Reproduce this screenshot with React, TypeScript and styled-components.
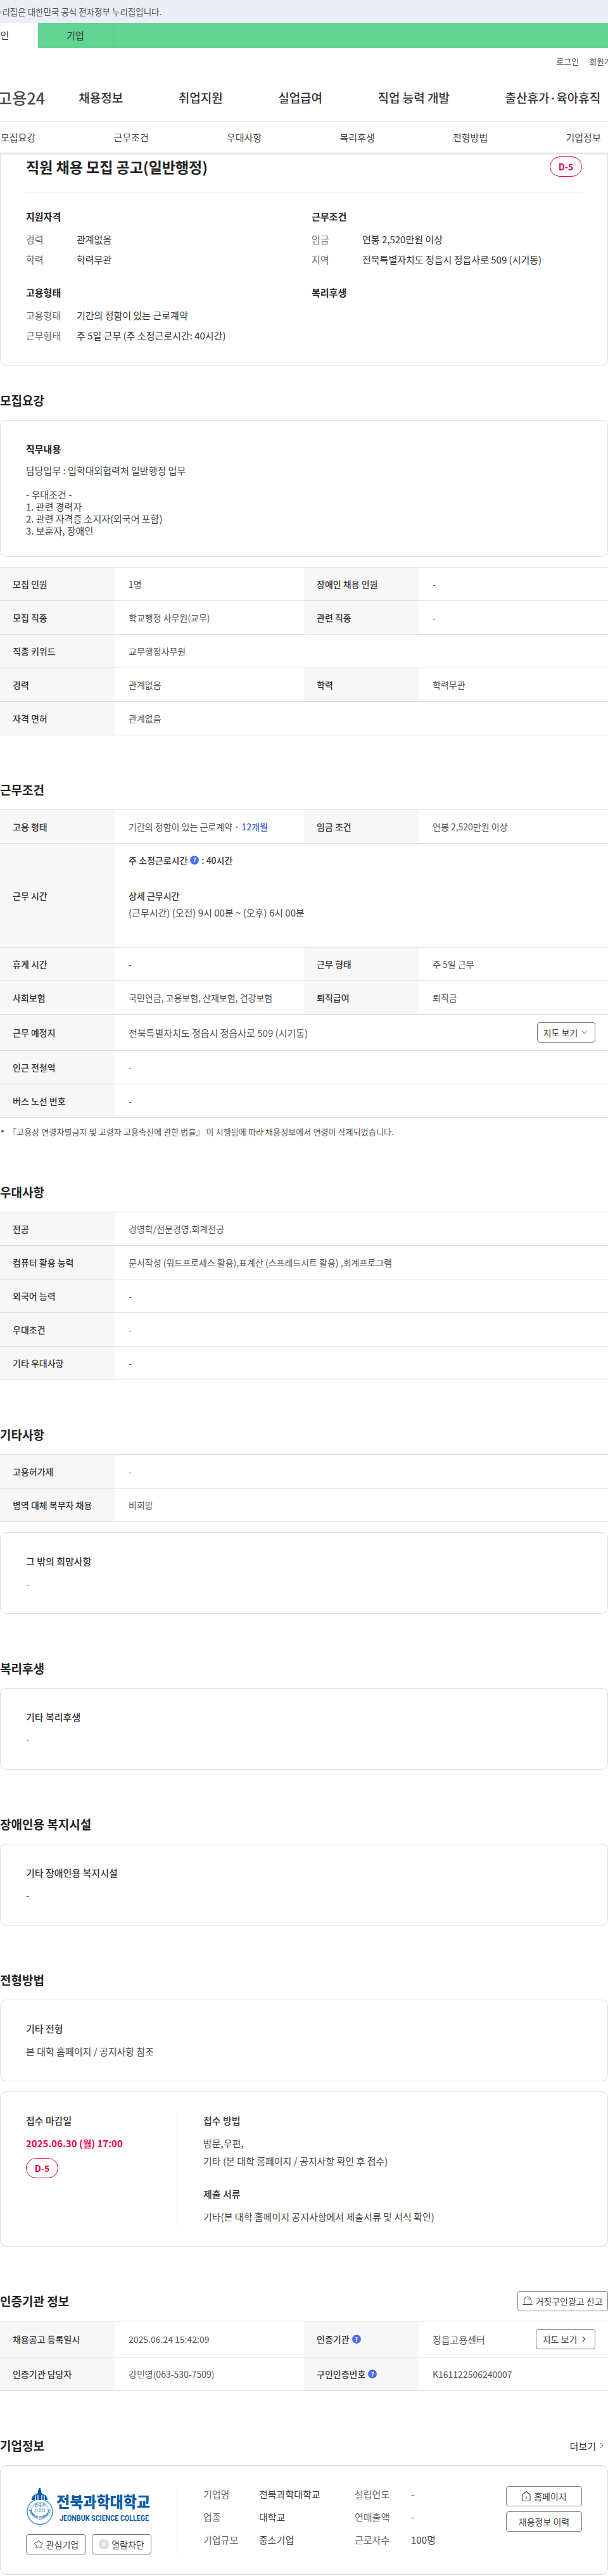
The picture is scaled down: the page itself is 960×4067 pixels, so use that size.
import type { ReactNode } from 'react';
import { ChevronDown, ChevronRight, Star } from 'lucide-react';
import { createGlobalStyle, styled } from 'styled-components';

const GlobalStyle = createGlobalStyle`
  html, body {
    margin: 0;
    padding: 0;
    background: #fff;
    overflow-x: hidden;
  }
  body {
    font-family: "Noto Sans CJK KR", "Noto Sans", sans-serif;
    color: #333;
  }
  * {
    box-sizing: border-box;
  }
`;

const Page = styled.div`
  width: 960px;
  overflow: hidden;
`;

const GovBar = styled.div`
  height: 36px;
  background: #ebeff5;
  font-size: 13.5px;
  line-height: 36px;
  color: #555;
  margin-left: 0;
  span {
    display: block;
    margin-left: -9px;
  }
`;

const UserBar = styled.div`
  display: flex;
  height: 40px;
  background: #60d591;
`;

const UserTab = styled.div<{ $active?: boolean }>`
  flex: 0 0 119px;
  margin-left: ${(p) => (p.$active ? '-59px' : '0')};
  text-align: center;
  font-size: 15px;
  line-height: 40px;
  color: #333;
  background: ${(p) => (p.$active ? '#fff' : 'transparent')};
  border-right: ${(p) => (p.$active ? '0' : '1px solid rgba(0, 0, 0, 0.06)')};
`;

const UtilNav = styled.div`
  display: flex;
  justify-content: flex-end;
  align-items: center;
  gap: 16px;
  height: 40px;
  margin-right: -18px;
  font-size: 13px;
  color: #555;
`;

const MainNav = styled.nav`
  display: flex;
  align-items: center;
  height: 76px;
  border-bottom: 1px solid #eee;
  white-space: nowrap;
`;

const SiteLogo = styled.div`
  margin-left: -4px;
  margin-right: 53px;
  font-size: 25px;
  font-weight: 500;
  letter-spacing: 0.2px;
  color: #4a4a4a;
`;

const MainNavItem = styled.a`
  margin-right: 87.5px;
  font-size: 19px;
  font-weight: 500;
  color: #333;
`;

const TabBar = styled.div`
  position: relative;
  z-index: 2;
  display: grid;
  grid-template-columns: repeat(6, 178.5px);
  height: 49px;
  padding-left: 1px;
  align-items: center;
  background: #fff;
  box-shadow: 0 1px 3px rgba(0, 0, 0, 0.25);
  font-size: 15px;
  color: #444;
`;

const Card = styled.div<{ $flat?: boolean }>`
  border: 1px solid #ddd;
  border-top-width: ${(p) => (p.$flat ? '0' : '1px')};
  border-radius: ${(p) => (p.$flat ? '0 0 10px 10px' : '10px')};
  background: #fff;
`;

const SummaryCard = styled(Card)`
  padding: 0 40px 36px;
`;

const TitleRow = styled.div`
  display: flex;
  justify-content: space-between;
  align-items: center;
  padding: 6px 0 25px;
  border-bottom: 1px solid #eee;
`;

const JobTitle = styled.h1`
  margin: 0;
  font-size: 23px;
  font-weight: 600;
  line-height: 31px;
  color: #222;
`;

const DdayBadge = styled.span`
  display: flex;
  align-items: center;
  justify-content: center;
  width: 51px;
  height: 32px;
  border: 1px solid #e6004c;
  border-radius: 16px;
  font-size: 14px;
  font-weight: 600;
  color: #e6004c;
`;

const SummaryGrid = styled.div`
  display: grid;
  grid-template-columns: 451px 1fr;
  row-gap: 32px;
  margin-top: 27px;
`;

const SummaryHeading = styled.h3`
  margin: 0 0 16px;
  font-size: 15px;
  line-height: 20px;
  font-weight: 600;
  color: #222;
`;

const SummaryRow = styled.div`
  display: flex;
  height: 20px;
  margin-bottom: 12px;
  font-size: 15px;
  line-height: 20px;
  &:last-child {
    margin-bottom: 0;
  }
`;

const SummaryLabel = styled.span`
  flex: 0 0 80px;
  color: #666;
`;

const SummaryValue = styled.span`
  color: #333;
`;

const Section = styled.section<{ $first?: boolean }>`
  margin-top: ${(p) => (p.$first ? '40px' : '71px')};
`;

const SectionHead = styled.div`
  display: flex;
  justify-content: space-between;
  align-items: center;
  height: 30px;
  margin-bottom: 16px;
`;

const SectionTitle = styled.h2`
  margin: 0;
  font-size: 19px;
  line-height: 30px;
  font-weight: 600;
  color: #222;
`;

const MoreLink = styled.a`
  display: flex;
  align-items: center;
  gap: 1px;
  margin-right: 2px;
  font-size: 15px;
  color: #333;
`;

const InfoCard = styled(Card)<{ $tail?: number }>`
  padding: 35px 40px ${(p) => p.$tail ?? 36}px;
  margin-top: 16px;
  &:first-child {
    margin-top: 0;
  }
`;

const InfoTitle = styled.h3`
  margin: 0 0 16px;
  font-size: 15px;
  line-height: 20px;
  font-weight: 500;
  color: #333;
`;

const InfoBody = styled.div`
  font-size: 15px;
  line-height: 20px;
  color: #444;
`;

const DutyTitle = styled(InfoTitle)`
  font-weight: 600;
  margin-bottom: 14px;
  color: #222;
`;

const DutyText = styled.div`
  font-size: 15px;
  line-height: 19px;
  color: #444;
  white-space: pre-line;
`;

const Table = styled.div`
  margin-top: 16px;
  border-top: 1px solid #ddd;
  &:first-child {
    margin-top: 0;
  }
`;

const Row = styled.div`
  display: grid;
  grid-template-columns: 182px 298px 182px 1fr;
  min-height: 53px;
  border-bottom: 1px solid #ddd;
`;

const Th = styled.div`
  display: flex;
  align-items: center;
  gap: 4px;
  padding: 0 20px;
  background: #f7f7f7;
  font-size: 14px;
  font-weight: 500;
  color: #333;
`;

const Td = styled.div<{ $wide?: boolean; $large?: boolean }>`
  display: flex;
  align-items: center;
  justify-content: space-between;
  grid-column: ${(p) => (p.$wide ? 'span 3' : 'auto')};
  padding: ${(p) => (p.$large ? '12px 20px 12px 21px' : '0 21px')};
  font-size: ${(p) => (p.$large ? '15px' : '14px')};
  color: #555;
`;

const WorkTime = styled.div`
  grid-column: span 3;
  padding: 16px 21px 44px;
  font-size: 14px;
  line-height: 20px;
  color: #444;
`;

const WorkHours = styled.div`
  display: flex;
  align-items: center;
  gap: 4px;
  margin-bottom: 36px;
  font-weight: 500;
  color: #333;
`;

const WorkDetailTitle = styled.div`
  margin-bottom: 7px;
  font-weight: 500;
  color: #333;
`;

const WorkDetail = styled.div`
  font-size: 15px;
  color: #444;
`;

const Period = styled.span`
  color: #3a5fe5;
  font-weight: 500;
`;

const HelpDot = styled.span`
  display: inline-flex;
  align-items: center;
  justify-content: center;
  width: 14px;
  height: 14px;
  border-radius: 50%;
  background: #4f6fe8;
  font-size: 9px;
  font-weight: 700;
  color: #fff;
`;

const OutlineButton = styled.button<{ $width: number }>`
  display: inline-flex;
  align-items: center;
  justify-content: center;
  gap: 4px;
  flex: none;
  height: 32px;
  width: ${(p) => p.$width}px;
  padding: 0;
  background: #fff;
  border: 1px solid #777;
  border-radius: 4px;
  font-family: inherit;
  font-size: 14px;
  color: #444;
  white-space: nowrap;
`;

const Note = styled.p`
  display: flex;
  align-items: center;
  gap: 5px;
  height: 20px;
  margin: 11px 0 0;
  padding-left: 2px;
  font-size: 13px;
  letter-spacing: 0.1px;
  color: #555;
  &::before {
    content: '';
    width: 4px;
    height: 4px;
    margin-right: 2px;
    border-radius: 50%;
    background: #666;
  }
`;

const ApplyCard = styled(Card)`
  display: flex;
  margin-top: 16px;
  padding: 32px 40px 31px;
`;

const DeadlineCol = styled.div`
  flex: 0 0 239px;
  padding-top: 3px;
  border-right: 1px solid #e5e5e5;
`;

const ApplyCol = styled.div`
  flex: 1;
  padding: 3px 0 0 41px;
  height: 180px;
`;

const DeadlineDate = styled.div`
  margin: 0 0 13px;
  font-size: 15px;
  line-height: 20px;
  font-weight: 600;
  color: #e6004c;
`;

const ApplyText = styled.div`
  margin-top: -4px;
  margin-bottom: 28px;
  font-size: 15px;
  line-height: 28px;
  color: #444;
  white-space: pre-line;
`;

const CompanyCard = styled(Card)`
  display: flex;
  padding: 32px 40px 31px;
`;

const CompanyLeft = styled.div`
  flex: 0 0 239px;
  border-right: 1px solid #e5e5e5;
`;

const LogoSvg = styled.svg`
  display: block;
  margin: 3px 0 14px;
`;

const InterestRow = styled.div`
  display: flex;
  gap: 9px;
`;

const CompanyInfo = styled.div`
  flex: 1;
  display: grid;
  grid-template-columns: 88px 151px 89px 1fr;
  grid-auto-rows: 20px;
  row-gap: 16px;
  padding: 3px 0 0 41px;
  font-size: 15px;
  line-height: 20px;
`;

const InfoLabel = styled.span`
  color: #666;
`;

const InfoValue = styled.span`
  color: #444;
`;

const CompanyActions = styled.div`
  display: flex;
  flex-direction: column;
  gap: 8px;
`;

const HomeIcon = ({ mark }: { mark?: boolean }) => (
  <svg width="16" height="18" viewBox="0 0 16 18" fill="none" stroke="#444" strokeWidth="1.1">
    {mark ? (
      <>
        <path d="M2 16.5V6.5L8 1.5l6 5v10z" strokeLinejoin="round" />
        <path d="M8 9.5v4" />
      </>
    ) : (
      <>
        <path d="M2.5 14V7.5a5.5 5.5 0 0 1 11 0V14" />
        <path d="M.5 14.5h15M8 5a2.5 2.5 0 0 1 2.5 2.5" />
      </>
    )}
  </svg>
);

const BlockIcon = () => (
  <svg width="16" height="16" viewBox="0 0 16 16">
    <circle cx="8" cy="8" r="8" fill="#ddd" />
    <path d="M5 5l6 6M11 5l-6 6" stroke="#fff" strokeWidth="1.4" />
  </svg>
);

const CollegeLogo = () => (
  <LogoSvg width="197" height="59" viewBox="0 0 197 59">
    <circle cx="22" cy="37.5" r="20" fill="#fff" stroke="#3f8ac9" strokeWidth="1.4" />
    <circle cx="22" cy="36" r="13.5" fill="#fff" stroke="#3f8ac9" strokeWidth="0.8" />
    <path d="M9 19c0-6 4-9 8-9l2-3V3h1V0h3v3h1v4l2 3c4 0 8 3 8 9z" fill="#0d5aa7" />
    <path d="M15 12v7M19 11v8M25 11v8M29 12v7" stroke="#fff" strokeWidth="1.4" />
    <text x="13" y="29" fontSize="6" fill="#2d78b8" textLength="18" lengthAdjust="spacingAndGlyphs">
      責任奉
    </text>
    <text x="13" y="37" fontSize="6" fill="#2d78b8" textLength="18" lengthAdjust="spacingAndGlyphs">
      力念仕
    </text>
    <path id="ring" d="M4.5 34a18 18 0 0 0 35 0" fill="none" />
    <text fontSize="4.6" fontWeight="700" fill="#0d5aa7" fontFamily="Roboto, sans-serif">
      <textPath href="#ring">JEONBUK SCIENCE COLLEGE</textPath>
    </text>
    <text
      x="48"
      y="31"
      fontSize="24"
      fontWeight="900"
      fill="#0d5aa7"
      textLength="148"
      lengthAdjust="spacingAndGlyphs"
    >
      전북과학대학교
    </text>
    <text
      x="53"
      y="52"
      fontSize="12"
      fontWeight="700"
      fill="#0d5aa7"
      fontFamily="Roboto, sans-serif"
      textLength="141"
      lengthAdjust="spacingAndGlyphs"
    >
      JEONBUK SCIENCE COLLEGE
    </text>
  </LogoSvg>
);

const navItems = ['채용정보', '취업지원', '실업급여', '직업 능력 개발', '출산휴가·육아휴직'];
const tabs = ['모집요강', '근무조건', '우대사항', '복리후생', '전형방법', '기업정보'];

const Field = ({ label, value }: { label: string; value: string }) => (
  <SummaryRow>
    <SummaryLabel>{label}</SummaryLabel>
    <SummaryValue>{value}</SummaryValue>
  </SummaryRow>
);

const WideRow = ({ label, value }: { label: string; value: string }) => (
  <Row>
    <Th>{label}</Th>
    <Td $wide>{value}</Td>
  </Row>
);

const PairRow = ({ cells }: { cells: [string, ReactNode, string, ReactNode] }) => (
  <Row>
    <Th>{cells[0]}</Th>
    <Td>{cells[1]}</Td>
    <Th>{cells[2]}</Th>
    <Td>{cells[3]}</Td>
  </Row>
);

const App = () => {
  return (
    <Page>
      <GlobalStyle />
      <GovBar>
        <span>누리집은 대한민국 공식 전자정부 누리집입니다.</span>
      </GovBar>
      <UserBar>
        <UserTab $active>개인</UserTab>
        <UserTab>기업</UserTab>
      </UserBar>
      <UtilNav>
        <span>로그인</span>
        <span>회원가입</span>
      </UtilNav>
      <MainNav>
        <SiteLogo>고용24</SiteLogo>
        {navItems.map((item) => (
          <MainNavItem key={item}>{item}</MainNavItem>
        ))}
      </MainNav>
      <TabBar>
        {tabs.map((tab) => (
          <span key={tab}>{tab}</span>
        ))}
      </TabBar>

      <SummaryCard $flat>
        <TitleRow>
          <JobTitle>직원 채용 모집 공고(일반행정)</JobTitle>
          <DdayBadge>D-5</DdayBadge>
        </TitleRow>
        <SummaryGrid>
          <div>
            <SummaryHeading>지원자격</SummaryHeading>
            <Field label="경력" value="관계없음" />
            <Field label="학력" value="학력무관" />
          </div>
          <div>
            <SummaryHeading>근무조건</SummaryHeading>
            <Field label="임금" value="연봉 2,520만원 이상" />
            <Field label="지역" value="전북특별자치도 정읍시 정읍사로 509 (시기동)" />
          </div>
          <div>
            <SummaryHeading>고용형태</SummaryHeading>
            <Field label="고용형태" value="기간의 정함이 있는 근로계약" />
            <Field label="근무형태" value="주 5일 근무 (주 소정근로시간: 40시간)" />
          </div>
          <div>
            <SummaryHeading>복리후생</SummaryHeading>
          </div>
        </SummaryGrid>
      </SummaryCard>

      <Section $first>
        <SectionHead>
          <SectionTitle>모집요강</SectionTitle>
        </SectionHead>
        <InfoCard $tail={31}>
          <DutyTitle>직무내용</DutyTitle>
          <DutyText>
            {`담당업무 : 입학대외협력처 일반행정 업무

- 우대조건 -
1. 관련 경력자
2. 관련 자격증 소지자(외국어 포함)
3. 보훈자, 장애인`}
          </DutyText>
        </InfoCard>
        <Table>
          <PairRow cells={['모집 인원', '1명', '장애인 채용 인원', '-']} />
          <PairRow cells={['모집 직종', '학교행정 사무원(교무)', '관련 직종', '-']} />
          <WideRow label="직종 키워드" value="교무행정사무원" />
          <PairRow cells={['경력', '관계없음', '학력', '학력무관']} />
          <WideRow label="자격 면허" value="관계없음" />
        </Table>
      </Section>

      <Section>
        <SectionHead>
          <SectionTitle>근무조건</SectionTitle>
        </SectionHead>
        <Table>
          <PairRow
            cells={[
              '고용 형태',
              <span key="contract">
                기간의 정함이 있는 근로계약 <Period>· 12개월</Period>
              </span>,
              '임금 조건',
              '연봉 2,520만원 이상',
            ]}
          />
          <Row>
            <Th>근무 시간</Th>
            <WorkTime>
              <WorkHours>
                주 소정근로시간 <HelpDot>?</HelpDot>: 40시간
              </WorkHours>
              <WorkDetailTitle>상세 근무시간</WorkDetailTitle>
              <WorkDetail>(근무시간) (오전) 9시 00분 ~ (오후) 6시 00분</WorkDetail>
            </WorkTime>
          </Row>
          <PairRow cells={['휴게 시간', '-', '근무 형태', '주 5일 근무']} />
          <PairRow cells={['사회보험', '국민연금, 고용보험, 산재보험, 건강보험', '퇴직급여', '퇴직금']} />
          <Row>
            <Th>근무 예정지</Th>
            <Td $wide $large>
              전북특별자치도 정읍시 정읍사로 509 (시기동)
              <OutlineButton $width={92}>
                지도 보기 <ChevronDown size={14} strokeWidth={1.5} />
              </OutlineButton>
            </Td>
          </Row>
          <WideRow label="인근 전철역" value="-" />
          <WideRow label="버스 노선 번호" value="-" />
        </Table>
        <Note>『고용상 연령차별금지 및 고령자 고용촉진에 관한 법률』 이 시행됨에 따라 채용정보에서 연령이 삭제되었습니다.</Note>
      </Section>

      <Section>
        <SectionHead>
          <SectionTitle>우대사항</SectionTitle>
        </SectionHead>
        <Table>
          <WideRow label="전공" value="경영학/전문경영.회계전공" />
          <WideRow label="컴퓨터 활용 능력" value="문서작성 (워드프로세스 활용),표계산 (스프레드시트 활용)  ,회계프로그램" />
          <WideRow label="외국어 능력" value="-" />
          <WideRow label="우대조건" value="-" />
          <WideRow label="기타 우대사항" value="-" />
        </Table>
      </Section>

      <Section>
        <SectionHead>
          <SectionTitle>기타사항</SectionTitle>
        </SectionHead>
        <Table>
          <WideRow label="고용허가제" value="-" />
          <WideRow label="병역 대체 복무자 채용" value="비희망" />
        </Table>
        <InfoCard>
          <InfoTitle>그 밖의 희망사항</InfoTitle>
          <InfoBody>-</InfoBody>
        </InfoCard>
      </Section>

      <Section>
        <SectionHead>
          <SectionTitle>복리후생</SectionTitle>
        </SectionHead>
        <InfoCard>
          <InfoTitle>기타 복리후생</InfoTitle>
          <InfoBody>-</InfoBody>
        </InfoCard>
      </Section>

      <Section>
        <SectionHead>
          <SectionTitle>장애인용 복지시설</SectionTitle>
        </SectionHead>
        <InfoCard>
          <InfoTitle>기타 장애인용 복지시설</InfoTitle>
          <InfoBody>-</InfoBody>
        </InfoCard>
      </Section>

      <Section>
        <SectionHead>
          <SectionTitle>전형방법</SectionTitle>
        </SectionHead>
        <InfoCard>
          <InfoTitle>기타 전형</InfoTitle>
          <InfoBody>본 대학 홈페이지 / 공지사항 참조</InfoBody>
        </InfoCard>
        <ApplyCard>
          <DeadlineCol>
            <InfoTitle>접수 마감일</InfoTitle>
            <DeadlineDate>2025.06.30 (월) 17:00</DeadlineDate>
            <DdayBadge>D-5</DdayBadge>
          </DeadlineCol>
          <ApplyCol>
            <InfoTitle>접수 방법</InfoTitle>
            <ApplyText>
              {`방문,우편,
기타 (본 대학 홈페이지 / 공지사항 확인 후 접수)`}
            </ApplyText>
            <InfoTitle>제출 서류</InfoTitle>
            <InfoBody>기타(본 대학 홈페이지 공지사항에서 제출서류 및 서식 확인)</InfoBody>
          </ApplyCol>
        </ApplyCard>
      </Section>

      <Section>
        <SectionHead>
          <SectionTitle>인증기관 정보</SectionTitle>
          <OutlineButton $width={143}>
            <HomeIcon /> 거짓구인광고 신고
          </OutlineButton>
        </SectionHead>
        <Table>
          <Row>
            <Th>채용공고 등록일시</Th>
            <Td>2025.06.24 15:42:09</Td>
            <Th>
              인증기관 <HelpDot>?</HelpDot>
            </Th>
            <Td $large>
              <span>정읍고용센터</span>
              <OutlineButton $width={94}>
                지도 보기 <ChevronRight size={14} strokeWidth={2} />
              </OutlineButton>
            </Td>
          </Row>
          <Row>
            <Th>인증기관 담당자</Th>
            <Td>강민영(063-530-7509)</Td>
            <Th>
              구인인증번호 <HelpDot>?</HelpDot>
            </Th>
            <Td>K161122506240007</Td>
          </Row>
        </Table>
      </Section>

      <Section>
        <SectionHead>
          <SectionTitle>기업정보</SectionTitle>
          <MoreLink>
            더보기 <ChevronRight size={16} strokeWidth={1.5} />
          </MoreLink>
        </SectionHead>
        <CompanyCard>
          <CompanyLeft>
            <CollegeLogo />
            <InterestRow>
              <OutlineButton $width={95}>
                <Star size={16} strokeWidth={1.3} /> 관심기업
              </OutlineButton>
              <OutlineButton $width={94}>
                <BlockIcon /> 열람차단
              </OutlineButton>
            </InterestRow>
          </CompanyLeft>
          <CompanyInfo>
            <InfoLabel>기업명</InfoLabel>
            <InfoValue>전북과학대학교</InfoValue>
            <InfoLabel>설립연도</InfoLabel>
            <InfoValue>-</InfoValue>
            <InfoLabel>업종</InfoLabel>
            <InfoValue>대학교</InfoValue>
            <InfoLabel>연매출액</InfoLabel>
            <InfoValue>-</InfoValue>
            <InfoLabel>기업규모</InfoLabel>
            <InfoValue>중소기업</InfoValue>
            <InfoLabel>근로자수</InfoLabel>
            <InfoValue>100명</InfoValue>
          </CompanyInfo>
          <CompanyActions>
            <OutlineButton $width={120}>
              <HomeIcon mark /> 홈페이지
            </OutlineButton>
            <OutlineButton $width={120}>채용정보 이력</OutlineButton>
          </CompanyActions>
        </CompanyCard>
      </Section>
    </Page>
  );
};

export default App;
